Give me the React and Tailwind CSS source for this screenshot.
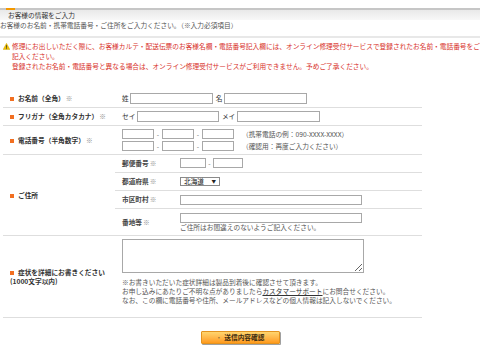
import React from "react";

const Mark = () => (
  <span className="inline-block w-[4px] h-[4px] bg-[#f26f21] mr-[4px] align-middle relative -top-[0.5px]" />
);

const Req = () => <span className="text-[#8c8c8c] font-normal ml-[1px]">※</span>;

const Box = ({ className = "" }) => (
  <input type="text" className={`block border border-[#a8a8a8] bg-white outline-none ${className}`} />
);

const Row = ({ label, className = "", children }) => (
  <div className={`flex items-center border-b border-[#dedede] ${className}`}>
    <div className="w-[112px] shrink-0 pl-[7px] font-bold text-[#333]">
      <Mark />
      {label}
      <Req />
    </div>
    <div className="flex-1 h-full">{children}</div>
  </div>
);

const SubRow = ({ label, className = "", children }) => (
  <div className={`flex items-center ${className}`}>
    <div className="w-[65px] shrink-0 pl-[7px] font-bold text-[#444]">
      {label}
      <Req />
    </div>
    <div>{children}</div>
  </div>
);

export default function App() {
  return (
    <div className="w-[480px] h-[357px] overflow-hidden bg-white font-['Noto_Sans_CJK_JP',sans-serif] text-[6.7px] text-[#333]">
      {/* section heading */}
      <div className="pt-[8px]">
        <div className="flex h-[2px] bg-[#c6c6c6]">
          <div className="ml-[6px] w-[9px] bg-[#f39800]" />
        </div>
        <div className="h-[10px] flex items-center pl-[8px] bg-gradient-to-b from-[#e9e9e9] to-[#f8f8f8] text-[#333]">
          お客様の情報をご入力
        </div>
      </div>
      <p className="leading-[10px] text-[#555] whitespace-nowrap">
        お客様のお名前・携帯電話番号・ご住所をご入力ください。（※入力必須項目）
      </p>
      <div className="mt-[6px] h-[2px] bg-[#e8e8e8]" />

      {/* warning */}
      <div className="mt-[3px] flex pl-[3px] text-[#d8312a] leading-[10px]">
        <svg width="7" height="7" viewBox="0 0 7 7" className="mt-[2px] shrink-0">
          <polygon points="3.5,0.3 6.9,6.6 0.1,6.6" fill="#f2c200" stroke="#c89a00" strokeWidth="0.4" />
          <rect x="3.1" y="2.2" width="0.8" height="2.6" fill="#333" />
          <rect x="3.1" y="5.3" width="0.8" height="0.8" fill="#333" />
        </svg>
        <div className="ml-[2px] whitespace-nowrap">
          修理にお出しいただく際に、お客様カルテ・配送伝票のお客様名欄・電話番号記入欄には、オンライン修理受付サービスで登録されたお名前・電話番号をご
          <br />
          記入ください。
          <br />
          登録されたお名前・電話番号と異なる場合は、オンライン修理受付サービスがご利用できません。予めご了承ください。
        </div>
      </div>

      {/* form table */}
      <div className="mt-[19px] ml-[3px] w-[419px]">
        <Row label="お名前（全角）" className="h-[18px]">
          <div className="flex items-center h-full pl-[7px]">
            <span>姓</span>
            <Box className="ml-[1px] w-[83px] h-[11px]" />
            <span className="ml-[3px]">名</span>
            <Box className="ml-[1.5px] w-[83px] h-[11px]" />
          </div>
        </Row>
        <Row label="フリガナ（全角カタカナ）" className="h-[18px]">
          <div className="flex items-center h-full pl-[7px]">
            <span>セイ</span>
            <Box className="ml-[1.5px] w-[82px] h-[11px]" />
            <span className="ml-[3px]">メイ</span>
            <Box className="ml-[1.5px] w-[83px] h-[11px]" />
          </div>
        </Row>
        <Row label="電話番号（半角数字）" className="h-[29px]">
          <div className="flex flex-col justify-center gap-[1px] h-full pl-[7px]">
            <div className="flex items-center">
              <Box className="w-[32px] h-[10px]" />
              <span className="w-[8px] text-center text-[#666]">-</span>
              <Box className="w-[32px] h-[10px]" />
              <span className="w-[8px] text-center text-[#666]">-</span>
              <Box className="w-[32px] h-[10px]" />
              <span className="ml-[8px] text-[#555]">（携帯電話の例：090-XXXX-XXXX）</span>
            </div>
            <div className="flex items-center">
              <Box className="w-[32px] h-[10px]" />
              <span className="w-[8px] text-center text-[#666]">-</span>
              <Box className="w-[32px] h-[10px]" />
              <span className="w-[8px] text-center text-[#666]">-</span>
              <Box className="w-[32px] h-[10px]" />
              <span className="ml-[8px] text-[#555]">（確認用：再度ご入力ください）</span>
            </div>
          </div>
        </Row>

        {/* address */}
        <div className="flex items-center border-b border-[#dedede] h-[81px]">
          <div className="w-[112px] shrink-0 pl-[7px] font-bold text-[#333]">
            <Mark />
            ご住所
          </div>
          <div className="flex-1 flex flex-col">
            <SubRow label="郵便番号" className="h-[18px] border-b border-[#dedede]">
              <div className="flex items-center">
                <Box className="w-[26px] h-[10px]" />
                <span className="w-[7px] text-center text-[#666]">-</span>
                <Box className="w-[30px] h-[10px]" />
              </div>
            </SubRow>
            <SubRow label="都道府県" className="h-[18px] border-b border-[#dedede]">
              <div className="w-[40px] h-[9px] border border-[#8a8a8a] bg-white flex items-center justify-between pl-[3px] pr-[3px] text-[#222]">
                <span>北海道</span>
                <span className="text-[4.5px]">▼</span>
              </div>
            </SubRow>
            <SubRow label="市区町村" className="h-[18px] border-b border-[#dedede]">
              <Box className="w-[182px] h-[10px]" />
            </SubRow>
            <SubRow label="番地等" className="h-[26px]">
              <div className="flex flex-col">
                <Box className="w-[182px] h-[10px]" />
                <span className="leading-[9px] text-[#555]">ご住所はお間違えのないようご記入ください。</span>
              </div>
            </SubRow>
          </div>
        </div>

        {/* symptoms */}
        <div className="flex items-center border-b border-[#dedede] h-[82px]">
          <div className="w-[112px] shrink-0 pl-[7px] font-bold text-[#333] leading-[8.5px]">
            <Mark />
            症状を詳細にお書きください
            <br />
            (1000文字以内)
          </div>
          <div className="flex-1 self-start pt-[3px] pl-[7px]">
            <textarea className="block w-[242px] h-[34px] border border-[#a8a8a8] bg-white outline-none" />
            <div className="mt-[5px] leading-[9px] text-[#555] whitespace-nowrap">
              ※お書きいただいた症状詳細は製品到着後に確認させて頂きます。
              <br />
              お申し込みにあたりご不明な点がありましたら
              <span className="underline text-[#333]">カスタマーサポート</span>
              にお問合せください。
              <br />
              なお、この欄に電話番号や住所、メールアドレスなどの個人情報は記入しないでください。
            </div>
          </div>
        </div>
      </div>

      {/* submit */}
      <div className="mt-[13px] flex justify-center">
        <button className="w-[79px] h-[13px] rounded-[1px] border border-[#e3931f] bg-gradient-to-b from-[#ffd56e] to-[#ff9a17] shadow-[1px_1px_0_#a0a0a0] font-bold text-[#3a2a10] flex items-center justify-center">
          <span className="text-[#8a6a3a] font-normal mr-[2px]">・</span>
          送信内容確認
        </button>
      </div>
    </div>
  );
}
